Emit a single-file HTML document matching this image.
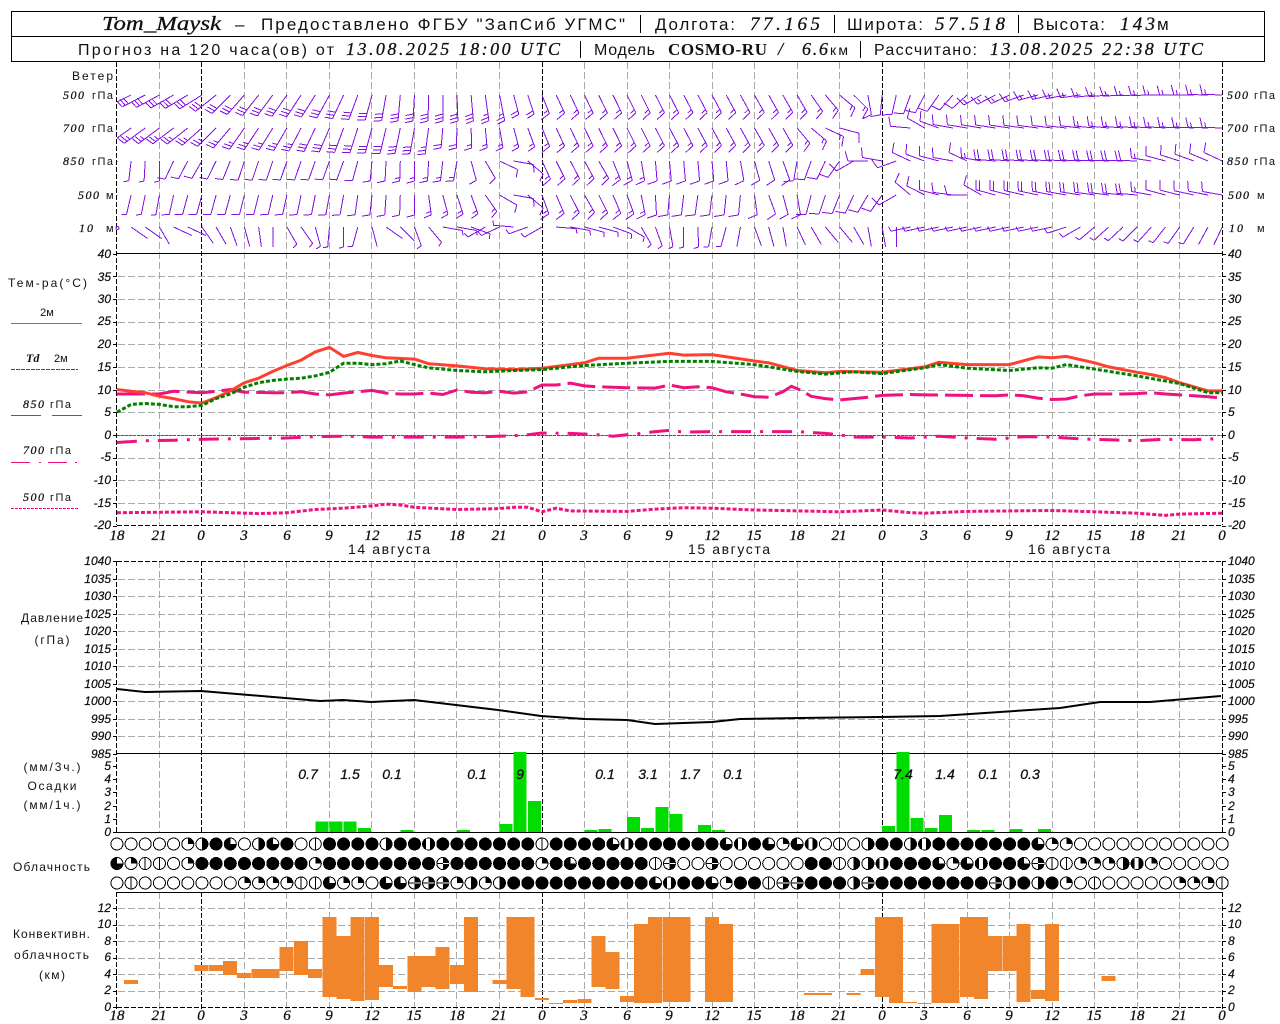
<!DOCTYPE html>
<html lang="ru"><head><meta charset="utf-8"><title>Tom_Maysk</title>
<style>
html,body{margin:0;padding:0;background:#fff;width:1280px;height:1024px;overflow:hidden}
svg{display:block}
text{font-family:"Liberation Sans","DejaVu Sans",sans-serif;fill:#111}
.i{font-family:"Liberation Serif","DejaVu Serif",serif;font-style:italic;stroke:#000;stroke-width:.25}
.b{font-family:"Liberation Serif","DejaVu Serif",serif;font-weight:bold}
.h1{font-size:17px}.h2{font-size:16px}
.n{font-family:"Liberation Serif",serif;font-style:italic;font-size:12px;stroke:#000;stroke-width:.2}
.hr{font-family:"Liberation Serif",serif;font-style:italic;font-size:15px;text-anchor:middle;stroke:#000;stroke-width:.25}
.l{font-size:12px}.u{font-size:11px}
.e{text-anchor:end}.m{text-anchor:middle}
</style></head><body>
<svg xmlns="http://www.w3.org/2000/svg" width="1280" height="1024" viewBox="0 0 1280 1024">
<defs><clipPath id="pc"><rect x="117" y="62" width="1105" height="191"/></clipPath></defs>
<rect width="1280" height="1024" fill="#fff"/>
<g id="gr"></g>
<rect x="11.5" y="11.5" width="1253" height="50" fill="#fff" stroke="#000" shape-rendering="crispEdges"/>
<path d="M11 36.5H1264M640.5 15V33M834.5 15V33M1018.5 15V33M580.5 41V58M860.5 41V58" stroke="#000" fill="none" shape-rendering="crispEdges"/>

<text class="i" x="102" y="30" font-size="20" textLength="119" lengthAdjust="spacingAndGlyphs">Tom_Maysk</text>
<text class="h1" x="235" y="30" textLength="11">–</text>
<text class="h1" x="261" y="30" textLength="364" lengthAdjust="spacing">Предоставлено ФГБУ "ЗапСиб УГМС"</text>
<text class="h1" x="655" y="30" textLength="80" lengthAdjust="spacing">Долгота:</text>
<text class="i" x="750" y="30" font-size="19" textLength="70" lengthAdjust="spacing">77.165</text>
<text class="h1" x="847" y="30" textLength="76" lengthAdjust="spacing">Широта:</text>
<text class="i" x="935" y="30" font-size="19" textLength="70" lengthAdjust="spacing">57.518</text>
<text class="h1" x="1033" y="30" textLength="72" lengthAdjust="spacing">Высота:</text>
<text class="i" x="1120" y="30" font-size="19" textLength="35" lengthAdjust="spacing">143</text>
<text class="h1" x="1157" y="30" textLength="12">м</text>

<text class="h2" x="78" y="55" textLength="256" lengthAdjust="spacing">Прогноз на 120 часа(ов) от</text>
<text class="i" x="346" y="55" font-size="18" textLength="214" lengthAdjust="spacing">13.08.2025 18:00 UTC</text>
<text class="h2" x="594" y="55" textLength="61" lengthAdjust="spacing">Модель</text>
<text class="b" x="668" y="55" font-size="17" textLength="99" lengthAdjust="spacing">COSMO-RU</text>
<text class="i" x="778" y="55" font-size="18">/</text>
<text class="i" x="802" y="55" font-size="18" textLength="26" lengthAdjust="spacing">6.6</text>
<text x="830" y="55" font-size="14" textLength="18">км</text>
<text class="h2" x="874" y="55" textLength="103" lengthAdjust="spacing">Рассчитано:</text>
<text class="i" x="990" y="55" font-size="18" textLength="213" lengthAdjust="spacing">13.08.2025 22:38 UTC</text>

<text class="l e" x="113" y="80" textLength="41">Ветер</text>
<text class="n" x="63" y="99" textLength="21">500</text><text class="u" x="92" y="99" textLength="21">гПа</text>
<text class="n" x="63" y="132" textLength="21">700</text><text class="u" x="92" y="132" textLength="21">гПа</text>
<text class="n" x="63" y="165" textLength="21">850</text><text class="u" x="92" y="165" textLength="21">гПа</text>
<text class="n" x="78" y="199" textLength="21">500</text><text class="u" x="106" y="199">м</text>
<text class="n" x="79" y="232" textLength="14">10</text><text class="u" x="106" y="232">м</text>
<text class="n" x="1227" y="99" textLength="21">500</text><text class="u" x="1254" y="99" textLength="21">гПа</text>
<text class="n" x="1227" y="132" textLength="21">700</text><text class="u" x="1254" y="132" textLength="21">гПа</text>
<text class="n" x="1227" y="165" textLength="21">850</text><text class="u" x="1254" y="165" textLength="21">гПа</text>
<text class="n" x="1228" y="199" textLength="21">500</text><text class="u" x="1257" y="199">м</text>
<text class="n" x="1229" y="232" textLength="14">10</text><text class="u" x="1257" y="232">м</text>

<text class="l" x="8" y="287" textLength="79">Тем-ра(°C)</text>
<text class="u m" x="47" y="316">2м</text>
<text class="b" x="26" y="362" font-size="12" font-style="italic">Td</text><text class="u" x="54" y="362">2м</text>
<text class="n" x="23" y="408" textLength="21">850</text><text class="u" x="50" y="408" textLength="21">гПа</text>
<text class="n" x="23" y="454" textLength="21">700</text><text class="u" x="50" y="454" textLength="21">гПа</text>
<text class="n" x="23" y="501" textLength="21">500</text><text class="u" x="50" y="501" textLength="21">гПа</text>
<path d="M11 323.5H82" stroke="#ff4030" shape-rendering="crispEdges"/>
<path d="M11 369.5H78" stroke="#008000" stroke-dasharray="4 1" shape-rendering="crispEdges"/>
<path d="M11 415.5H41M52 415.5H82" stroke="#f0107f" shape-rendering="crispEdges"/>
<path d="M11 462.5H30M39 462.5H41M48 462.5H67M75 462.5H77" stroke="#f0107f" shape-rendering="crispEdges"/>
<path d="M11 508.5H78" stroke="#f0107f" stroke-dasharray="3 1" shape-rendering="crispEdges"/>

<g class="n" text-anchor="end">
<text x="111" y="258">40</text><text x="111" y="281">35</text><text x="111" y="303">30</text><text x="111" y="325">25</text><text x="111" y="348">20</text><text x="111" y="371">15</text><text x="111" y="394">10</text><text x="111" y="416">5</text><text x="111" y="439">0</text><text x="111" y="461">-5</text><text x="111" y="484">-10</text><text x="111" y="507">-15</text><text x="111" y="529">-20</text>
<text x="111" y="565">1040</text><text x="111" y="583">1035</text><text x="111" y="600">1030</text><text x="111" y="618">1025</text><text x="111" y="635">1020</text><text x="111" y="653">1015</text><text x="111" y="670">1010</text><text x="111" y="688">1005</text><text x="111" y="705">1000</text><text x="111" y="723">995</text><text x="111" y="740">990</text><text x="111" y="758">985</text>
<text x="111" y="770">5</text><text x="111" y="783">4</text><text x="111" y="796">3</text><text x="111" y="810">2</text><text x="111" y="823">1</text><text x="111" y="836">0</text>
<text x="111" y="912">12</text><text x="111" y="928">10</text><text x="111" y="945">8</text><text x="111" y="961">6</text><text x="111" y="978">4</text><text x="111" y="994">2</text><text x="111" y="1011">0</text>
</g>
<g class="n">
<text x="1228" y="258">40</text><text x="1228" y="281">35</text><text x="1228" y="303">30</text><text x="1228" y="325">25</text><text x="1228" y="348">20</text><text x="1228" y="371">15</text><text x="1228" y="394">10</text><text x="1228" y="416">5</text><text x="1228" y="439">0</text><text x="1228" y="461">-5</text><text x="1228" y="484">-10</text><text x="1228" y="507">-15</text><text x="1228" y="529">-20</text>
<text x="1228" y="565">1040</text><text x="1228" y="583">1035</text><text x="1228" y="600">1030</text><text x="1228" y="618">1025</text><text x="1228" y="635">1020</text><text x="1228" y="653">1015</text><text x="1228" y="670">1010</text><text x="1228" y="688">1005</text><text x="1228" y="705">1000</text><text x="1228" y="723">995</text><text x="1228" y="740">990</text><text x="1228" y="758">985</text>
<text x="1228" y="770">5</text><text x="1228" y="783">4</text><text x="1228" y="796">3</text><text x="1228" y="810">2</text><text x="1228" y="823">1</text><text x="1228" y="836">0</text>
<text x="1228" y="912">12</text><text x="1228" y="928">10</text><text x="1228" y="945">8</text><text x="1228" y="961">6</text><text x="1228" y="978">4</text><text x="1228" y="994">2</text><text x="1228" y="1011">0</text>
</g>
<g>
<text class="hr" x="117" y="540">18</text><text class="hr" x="159" y="540">21</text><text class="hr" x="201" y="540">0</text><text class="hr" x="244" y="540">3</text><text class="hr" x="287" y="540">6</text><text class="hr" x="329" y="540">9</text><text class="hr" x="372" y="540">12</text><text class="hr" x="414" y="540">15</text><text class="hr" x="457" y="540">18</text><text class="hr" x="499" y="540">21</text><text class="hr" x="542" y="540">0</text><text class="hr" x="584" y="540">3</text><text class="hr" x="627" y="540">6</text><text class="hr" x="669" y="540">9</text><text class="hr" x="712" y="540">12</text><text class="hr" x="754" y="540">15</text><text class="hr" x="797" y="540">18</text><text class="hr" x="839" y="540">21</text><text class="hr" x="882" y="540">0</text><text class="hr" x="924" y="540">3</text><text class="hr" x="967" y="540">6</text><text class="hr" x="1009" y="540">9</text><text class="hr" x="1052" y="540">12</text><text class="hr" x="1094" y="540">15</text><text class="hr" x="1137" y="540">18</text><text class="hr" x="1179" y="540">21</text><text class="hr" x="1222" y="540">0</text>
<text class="hr" x="117" y="1020">18</text><text class="hr" x="159" y="1020">21</text><text class="hr" x="201" y="1020">0</text><text class="hr" x="244" y="1020">3</text><text class="hr" x="287" y="1020">6</text><text class="hr" x="329" y="1020">9</text><text class="hr" x="372" y="1020">12</text><text class="hr" x="414" y="1020">15</text><text class="hr" x="457" y="1020">18</text><text class="hr" x="499" y="1020">21</text><text class="hr" x="542" y="1020">0</text><text class="hr" x="584" y="1020">3</text><text class="hr" x="627" y="1020">6</text><text class="hr" x="669" y="1020">9</text><text class="hr" x="712" y="1020">12</text><text class="hr" x="754" y="1020">15</text><text class="hr" x="797" y="1020">18</text><text class="hr" x="839" y="1020">21</text><text class="hr" x="882" y="1020">0</text><text class="hr" x="924" y="1020">3</text><text class="hr" x="967" y="1020">6</text><text class="hr" x="1009" y="1020">9</text><text class="hr" x="1052" y="1020">12</text><text class="hr" x="1094" y="1020">15</text><text class="hr" x="1137" y="1020">18</text><text class="hr" x="1179" y="1020">21</text><text class="hr" x="1222" y="1020">0</text>
</g>
<text x="348" y="554" font-size="14" textLength="82" lengthAdjust="spacing">14 августа</text>
<text x="688" y="554" font-size="14" textLength="82" lengthAdjust="spacing">15 августа</text>
<text x="1028" y="554" font-size="14" textLength="82" lengthAdjust="spacing">16 августа</text>

<text class="l m" x="52" y="622" textLength="62">Давление</text>
<text class="l m" x="52" y="644" textLength="35">(гПа)</text>
<text class="l m" x="52" y="771" textLength="57">(мм/3ч.)</text>
<text class="l m" x="52" y="790" textLength="49">Осадки</text>
<text class="l m" x="52" y="809" textLength="57">(мм/1ч.)</text>
<text class="l" x="13" y="871" textLength="77">Облачность</text>
<text class="l" x="13" y="938" textLength="77">Конвективн.</text>
<text class="l" x="14" y="959" textLength="75">облачность</text>
<text class="l m" x="52" y="979" textLength="26">(км)</text>

<g id="fg"></g>

<g class="i" font-size="14" text-anchor="middle">
<text x="308" y="779">0.7</text><text x="350" y="779">1.5</text><text x="392" y="779">0.1</text><text x="477" y="779">0.1</text><text x="520" y="779">9</text><text x="605" y="779">0.1</text><text x="648" y="779">3.1</text><text x="690" y="779">1.7</text><text x="733" y="779">0.1</text><text x="903" y="779">7.4</text><text x="945" y="779">1.4</text><text x="988" y="779">0.1</text><text x="1030" y="779">0.3</text>
</g>
</svg>
<script>
(function(){
var X=function(h){return 116.9+14.17*h};
var g='',f='';
var seg=[[62,525],[561,832],[892,1010]];
var i,j;
for(i=0;i<=26;i++){
  var h=i*3,x=Math.floor(X(h))+.5,blk=(i==2||i==10||i==18||i==26||i==0);
  var d='';
  for(j=0;j<3;j++)d+='M'+x+' '+seg[j][0]+'V'+seg[j][1];
  g+='<path d="'+d+'" stroke="'+(blk?'#000':'#aaa')+'" stroke-dasharray="'+(blk?'5 2':'7 3')+'" fill="none"/>';
}
var hy=[],y;
for(i=1;i<12;i++)hy.push(253.5+i*22.67);
for(i=1;i<11;i++)hy.push(561+i*17.5);
for(i=1;i<=6;i++)hy.push(1007-i*16.5);
var d='';
hy.forEach(function(v){d+='M118 '+(Math.round(v)+.5)+'H1221'});
g+='<path d="'+d+'" stroke="#aaa" stroke-dasharray="7 3" fill="none"/>';
g+='<path d="M117 253.5H1222M117 753.5H1222M117 832.5H1222M117 892.5H1222" stroke="#000" fill="none"/>';
g+='<path d="M117 525.5H1222M117 561.5H1222M117 1007.5H1222" stroke="#000" stroke-dasharray="5 2" fill="none"/>';
var t='';
for(i=0;i<13;i++){y=Math.round(253.5+i*22.67)+.5;t+='M113 '+y+'H117M1222 '+y+'H1226'}
for(i=0;i<12;i++){y=Math.round(561+i*17.5)+.5;t+='M113 '+y+'H117M1222 '+y+'H1226'}
for(i=0;i<6;i++){y=Math.round(832-i*13.2)+.5;t+='M113 '+y+'H117M1222 '+y+'H1226'}
for(i=0;i<7;i++){y=Math.round(1007-i*16.5)+.5;t+='M113 '+y+'H117M1222 '+y+'H1226'}
g+='<path d="'+t+'" stroke="#000" fill="none"/>';
document.getElementById('gr').setAttribute('shape-rendering','crispEdges');
document.getElementById('gr').innerHTML=g;

function parse(s){var a=s.trim().split(/\s+/).map(Number),r=[];for(var i=0;i<a.length;i+=2)r.push([a[i],a[i+1]]);return r}
function poly(s,stroke,w,dash){
  var p=parse(s).map(function(q){return X(q[0]).toFixed(1)+','+(434.8-4.53*q[1]).toFixed(1)}).join(' ');
  return '<polyline points="'+p+'" fill="none" stroke="'+stroke+'" stroke-width="'+w+'"'+(dash?' stroke-dasharray="'+dash+'"':'')+'/>';
}
f+='<path d="M117 435.5H1222" stroke="#2050ff" stroke-dasharray="3 1" shape-rendering="crispEdges"/>';
f+=poly('0 9 2 9 3 9 4 9.6 6 9.3 7 9.6 8 10 9 9.4 11 9.3 12 9.3 13 9.5 14 9 15 8.8 16 9.2 17 9.5 18 9.8 19 9.2 20 9 21 9 22 9.2 23 8.9 24 9.9 25 9.4 26 9.3 27 9.6 28 9.2 29 9.5 30 11 31 11 32 11.4 33 10.8 34 10.6 36 10.4 38 10.3 39 11 40 10.4 41 10.6 42 10.4 43 9.5 44 9 45 8.4 46 8.3 47 9.5 47.6 10.7 48.3 9.8 49 8.5 50 8 51 7.7 52 8 53 8.3 54 8.7 56 8.9 57 8.8 60 8.7 62 8.6 63 8.8 64 8.6 65 8.1 66 7.8 67 7.9 68 8.6 69 9 70 9 71 9 72 9.1 73 9.3 74 9 75 8.8 76 8.6 77 8.4 78 8.1','#f0107f',3,'28 7');
f+=poly('0 -1.7 2 -1.3 4 -1.2 6 -1 8 -.9 10 -.8 12 -.7 14 -.4 16 -.3 18 -.5 20 -.5 22 -.5 24 -.5 26 -.4 28 -.2 29 0 30 .4 32 .3 34 0 35 -.3 36 0 37 .3 38 .7 39 1 40 .6 42 .7 44 .7 46 .7 48 .7 50 .3 51 0 52 -.5 54 -.5 56 -.7 58 -.3 60 -.7 62 -1 63 -.7 64 -.4 66 -.5 68 -.9 70 -1.1 72 -1.3 74 -1 76 -1.1 78 -.8','#f0107f',3,'20 9 3 9');
f+=poly('0 -17.2 6 -17 10 -17.4 12 -17.2 14 -16.5 16 -16.2 18 -15.7 19 -15.3 20 -15.5 21 -16 24 -16.5 27 -16.3 28 -16 29 -16 30 -17 31 -16.2 32 -16.8 36 -16.9 38 -16.4 40 -16.1 42 -16.2 45 -16.6 48 -16.8 51 -17 54 -16.6 56 -17.2 57 -17.3 60 -16.9 63 -16.8 66 -16.7 69 -17 72 -17.3 74 -17.8 75 -17.5 78 -17.3','#f0107f',3,'4 2');
f+=poly('0 10 1 9.6 2 9.3 3 8.5 4 8 5 7.3 6 7 7 8.2 8 9.7 9 11.5 10 12.5 11 14 12 15.3 13 16.5 14 18.3 15 19.3 16 17.3 17 18.2 18 17.5 19 17 21 16.7 22 15.7 24 15.2 26 14.6 28 14.4 30 14.7 33 15.9 34 16.9 36 16.9 39 18 40 17.6 42 17.7 45 16.3 46 15.9 48 14.2 50 13.7 51 14 54 13.8 57 15 58 16 60 15.5 63 15.5 65 17.2 66 17 67 17.3 69 15.9 70 15 72 13.8 73 13.3 74 12.6 75 11.5 77 9.7 78 9.7','#ff4030',3);
f+=poly('0 5 1 6.7 2 6.9 3 6.7 4 6.2 5 6.2 6 6.5 7 8 8 9 9 10.5 10 11.5 11 12 12 12.3 13 12.5 14 13 15 13.8 16 15.8 17 15.8 18 15.5 19 15.7 20 16.3 21 15.5 22 14.8 24 14.2 26 13.9 28 14.2 30 14.4 33 15.3 36 15.8 39 16.2 42 16.2 45 15.5 48 14 50 13.4 52 13.9 54 13.5 57 14.8 58 15.5 60 14.7 63 14.2 65 14.8 66 14.7 67 15.5 69 14.5 72 13 75 11.3 77 9.3 78 9.3','#008000',3,'4 2');
f+='<polyline points="117,689 145,692 201,691 285,698 320,701 343,700 371,702 414,700 456,705 498,710 541,716 585,719 627,720 655,724 712,722 740,719 800,718 880,717 940,716 1000,712 1060,708 1100,702 1150,702 1221,696" fill="none" stroke="#000" stroke-width="2"/>';

// precipitation
var pr=[[14,245],[15,245],[16,245],[17,264],[20,270],[24,270],[27,252],[28,36],[29,183],[33,270],[34,267],[36,231],[37,264],[38,201],[39,222],[41,255],[42,270],[54,258],[55,36],[56,234],[57,264],[58,225],[60,270],[61,270],[63,267],[65,267]];
f+='<g shape-rendering="crispEdges" fill="#00dc00">';
pr.forEach(function(b){var yy=740+b[1]/3;f+='<rect x="'+X(b[0]).toFixed(1)+'" y="'+yy.toFixed(1)+'" width="13" height="'+(832-yy).toFixed(1)+'"/>'});
f+='</g>';

// convective
var cv=[[1,720,732],[6,675,693],[7,675,693],[8,663,705],[9,699,714],[10,687,714],[11,687,714],[12,621,693],[13,603,705],[14,687,714],[15,531,771],[16,588,777],[17,531,783],[18,531,780],[19,675,741],[20,738,747],[21,648,756],[22,648,741],[23,621,747],[24,675,732],[25,531,756],[27,720,732],[28,531,747],[29,531,771],[30,774,780],[31,789,792],[32,780,789],[33,777,789],[34,588,741],[35,636,747],[36,768,786],[37,552,789],[38,531,789],[39,531,786],[40,531,786],[42,531,786],[43,552,786],[49,759,765],[50,759,765],[52,759,765],[53,687,705],[54,531,771],[55,531,789],[56,786,789],[57,789,792],[58,552,789],[59,552,789],[60,531,771],[61,531,777],[62,588,693],[63,588,693],[64,552,786],[65,750,777],[66,552,783],[70,708,723]];
f+='<g shape-rendering="crispEdges" fill="#f0852c">';
cv.forEach(function(b){var a=740+b[1]/3,e=740+b[2]/3;f+='<rect x="'+(X(b[0])-7.2).toFixed(1)+'" y="'+a.toFixed(1)+'" width="14" height="'+(e-a).toFixed(1)+'"/>'});
f+='</g>';

// clouds
function rep(c,n){return new Array(n+1).join(c)}
var rows=[
 [844,'ooooo'+'QRFTo'+'RTFol'+'FFFF'+'RFF'+'M'+rep('F',7)+'l'+'FFFF'+'TM'+rep('F',6)+'TMFTQTM'+'olo'+'RFFRM'+rep('F',7)+'TQQ'+rep('o',11)],
 [863.5,'TQlloQ'+rep('F',8)+'Q'+rep('F',8)+'H'+rep('F',6)+'QFT'+rep('F',5)+'lHooH'+rep('o',6)+'FFlRRM'+'FFF'+'TQTMFFTHll'+'QQQRMQ'+rep('o',5)],
 [883,'ol'+rep('o',7)+'QQQQll'+'TQQo'+'TT'+'HHH'+'QRQR'+rep('F',10)+'TMFFTQFFlHH'+'FFFRH'+rep('F',8)+'HRFRFQol'+rep('o',5)+'QQQl']
];
var r=6,c='<g stroke-width="1" shape-rendering="crispEdges">';
rows.forEach(function(row){
  var cy=row[0],s=row[1];
  for(var k=0;k<s.length&&k<79;k++){
    var cx=+X(k).toFixed(1),ch=s[k];
    var fill=(ch=='F')?'#000':'#fff';
    c+='<circle cx="'+cx+'" cy="'+cy+'" r="'+r+'" fill="'+fill+'" stroke="#000"/>';
    if(ch=='l')c+='<path d="M'+cx+' '+(cy-r)+'V'+(cy+r)+'" stroke="#000"/>';
    if(ch=='Q')c+='<path d="M'+cx+' '+cy+'V'+(cy-r)+'A'+r+' '+r+' 0 0 1 '+(cx+r)+' '+cy+'Z" fill="#000"/>';
    if(ch=='R'||ch=='H')c+='<path d="M'+cx+' '+(cy-r)+'A'+r+' '+r+' 0 0 1 '+cx+' '+(cy+r)+'Z" fill="#000"/>';
    if(ch=='H')c+='<path d="M'+(cx-r)+' '+cy+'H'+cx+'" stroke="#000"/><path d="M'+cx+' '+cy+'H'+(cx+r)+'" stroke="#fff"/>';
    if(ch=='T')c+='<path d="M'+cx+' '+cy+'H'+(cx+r)+'A'+r+' '+r+' 0 1 1 '+cx+' '+(cy-r)+'Z" fill="#000"/>';
    if(ch=='M')c+='<circle cx="'+cx+'" cy="'+cy+'" r="'+r+'" fill="#000"/><rect x="'+(cx-2.5)+'" y="'+(cy-r+.5)+'" width="4" height="'+(2*r-1)+'" fill="#fff" stroke="none"/>';
  }
});
c+='</g>';
f+=c;

// wind barbs
function lerp(k,h){
  for(var i=0;i<k.length-1;i++){
    if(h>=k[i][0]&&h<=k[i+1][0]){
      var a=k[i],b=k[i+1],t=(b[0]==a[0])?0:(h-a[0])/(b[0]-a[0]);
      return [a[1]+(b[1]-a[1])*t,a[2]+(b[2]-a[2])*t];
    }
  }
  return k[k.length-1].slice(1);
}
var W=[
 [95,[[0,245,3],[6,238,3],[8,225,3],[10,218,3],[14,212,3],[16,205,3],[18,195,3],[20,185,3],[24,178,3],[26,172,2.5],[28,165,2],[31,155,1.5],[48,150,1.5],[50,140,1.5],[51,130,1.5],[52,135,1.5],[53,170,1],[54,185,1],[56,200,1],[58,215,1],[60,228,1],[61,240,1.5],[63,245,1.5],[65,255,1.5],[68,262,1.5],[72,268,1.5],[78,272,1.5]],[]],
 [128,[[0,235,2.5],[5,232,2.5],[7,225,2.5],[9,215,2.5],[12,210,2.5],[15,203,3],[18,195,3],[21,190,3],[23,185,2],[26,175,1.5],[29,160,1.5],[31,155,1.5],[47,150,1.5],[49,130,1.5],[50,115,1.5],[51,105,1],[56,275,1],[57,300,1],[58,290,1],[59,280,1],[78,272,1.5]],[52,53,54,55]],
 [161,[[0,190,.5],[3,180,.5],[4,205,1],[6,210,1],[9,198,1],[16,200,1],[17,195,1],[18,185,1],[21,180,1.5],[24,190,1.5],[25,165,1],[26,150,1],[27,115,1],[28,100,1],[29,130,1],[30,155,1.5],[34,150,1.5],[36,165,1.5],[38,175,1],[43,175,1],[45,165,1],[47,160,1],[48,190,1],[49,200,1],[50,205,1],[51,215,1],[52,240,1],[53,270,1],[54,280,1],[55,250,1],[56,295,1],[57,290,1],[59,280,1],[60,295,1],[61,280,1.5],[62,275,2],[72,272,2],[74,285,1],[78,295,1]],[]],
 [195,[[0,195,.5],[3,190,.5],[5,195,1],[8,195,1],[16,190,1],[21,180,1],[23,165,1.5],[25,160,1.5],[26,145,1.5],[27,120,1],[28,100,1],[29,130,1],[30,160,1.5],[33,150,1.5],[36,160,1.5],[39,185,1],[41,188,1],[44,185,1],[46,160,1],[47,165,1],[48,170,1],[49,195,1],[52,205,1],[54,215,1],[55,240,1],[56,310,1],[58,285,1],[60,270,1],[61,300,1],[62,285,2],[72,275,2],[74,285,1],[78,280,1]],[]],
 [227,[[1,125,0],[2,125,0],[3,150,0],[4,115,0],[5,115,0],[6,145,0],[7,150,0],[8,160,0],[9,165,0],[10,172,0],[11,180,0],[12,150,.5],[13,145,.5],[14,165,.5],[15,185,.5],[16,180,.5],[17,195,.5],[18,165,0],[19,125,0],[20,135,0],[21,160,.5],[22,140,.5],[23,100,.5],[24,100,.5],[25,110,.5],[26,240,.5],[27,245,.5],[28,275,.5],[29,250,.5],[30,240,.5],[31,95,.5],[32,100,.5],[33,105,.5],[34,105,.5],[35,110,.5],[36,120,.5],[37,150,.5],[39,170,.5],[40,180,.5],[41,178,.5],[42,190,.5],[43,195,.5],[44,190,0],[45,160,0],[46,165,0],[47,170,0],[48,155,0],[49,150,0],[50,140,0],[51,140,0],[52,150,0],[53,170,0],[54,170,0],[55,180,0],[56,258,.5],[66,258,.5],[67,252,.5],[68,240,.5],[69,230,.5],[72,225,.5],[75,215,.5],[78,205,0]],[0]]
];
var bp='';
W.forEach(function(w){
  var y0=w[0],k=w[1],skip=w[2];
  for(var h=0;h<=78;h++){
    if(skip.indexOf(h)>=0)continue;
    var v=lerp(k,h),phi=v[0]*Math.PI/180,n=Math.round(v[1]*2)/2;
    var ux=Math.sin(phi),uy=-Math.cos(phi);
    var L=n>=2.5?26:20,bx=X(h),by=y0;
    var ex=bx+L*ux,ey=by+L*uy;
    bp+='M'+bx.toFixed(1)+' '+by+'L'+ex.toFixed(1)+' '+ey.toFixed(1);
    var rx=ux*.26-uy*.97,ry=ux*.97+uy*.26;
    var fl=h<30?8:10;
    var full=Math.floor(n),half=(n-full)>0,off=0;
    for(var q=0;q<full;q++){
      var sx=ex-off*ux,sy=ey-off*uy;
      bp+='M'+sx.toFixed(1)+' '+sy.toFixed(1)+'l'+(fl*rx).toFixed(1)+' '+(fl*ry).toFixed(1);
      off+=3.5;
    }
    if(half){
      var sx2=ex-off*ux,sy2=ey-off*uy;
      bp+='M'+sx2.toFixed(1)+' '+sy2.toFixed(1)+'l'+(5*rx).toFixed(1)+' '+(5*ry).toFixed(1);
    }
  }
});
f+='<path clip-path="url(#pc)" d="'+bp+'" fill="none" stroke="#8210e0" stroke-width="1" shape-rendering="crispEdges"/>';
f+='<circle cx="117.5" cy="228" r="1.5" fill="none" stroke="#8210e0"/>';
document.getElementById('fg').innerHTML=f;
})();
</script>
</body></html>
